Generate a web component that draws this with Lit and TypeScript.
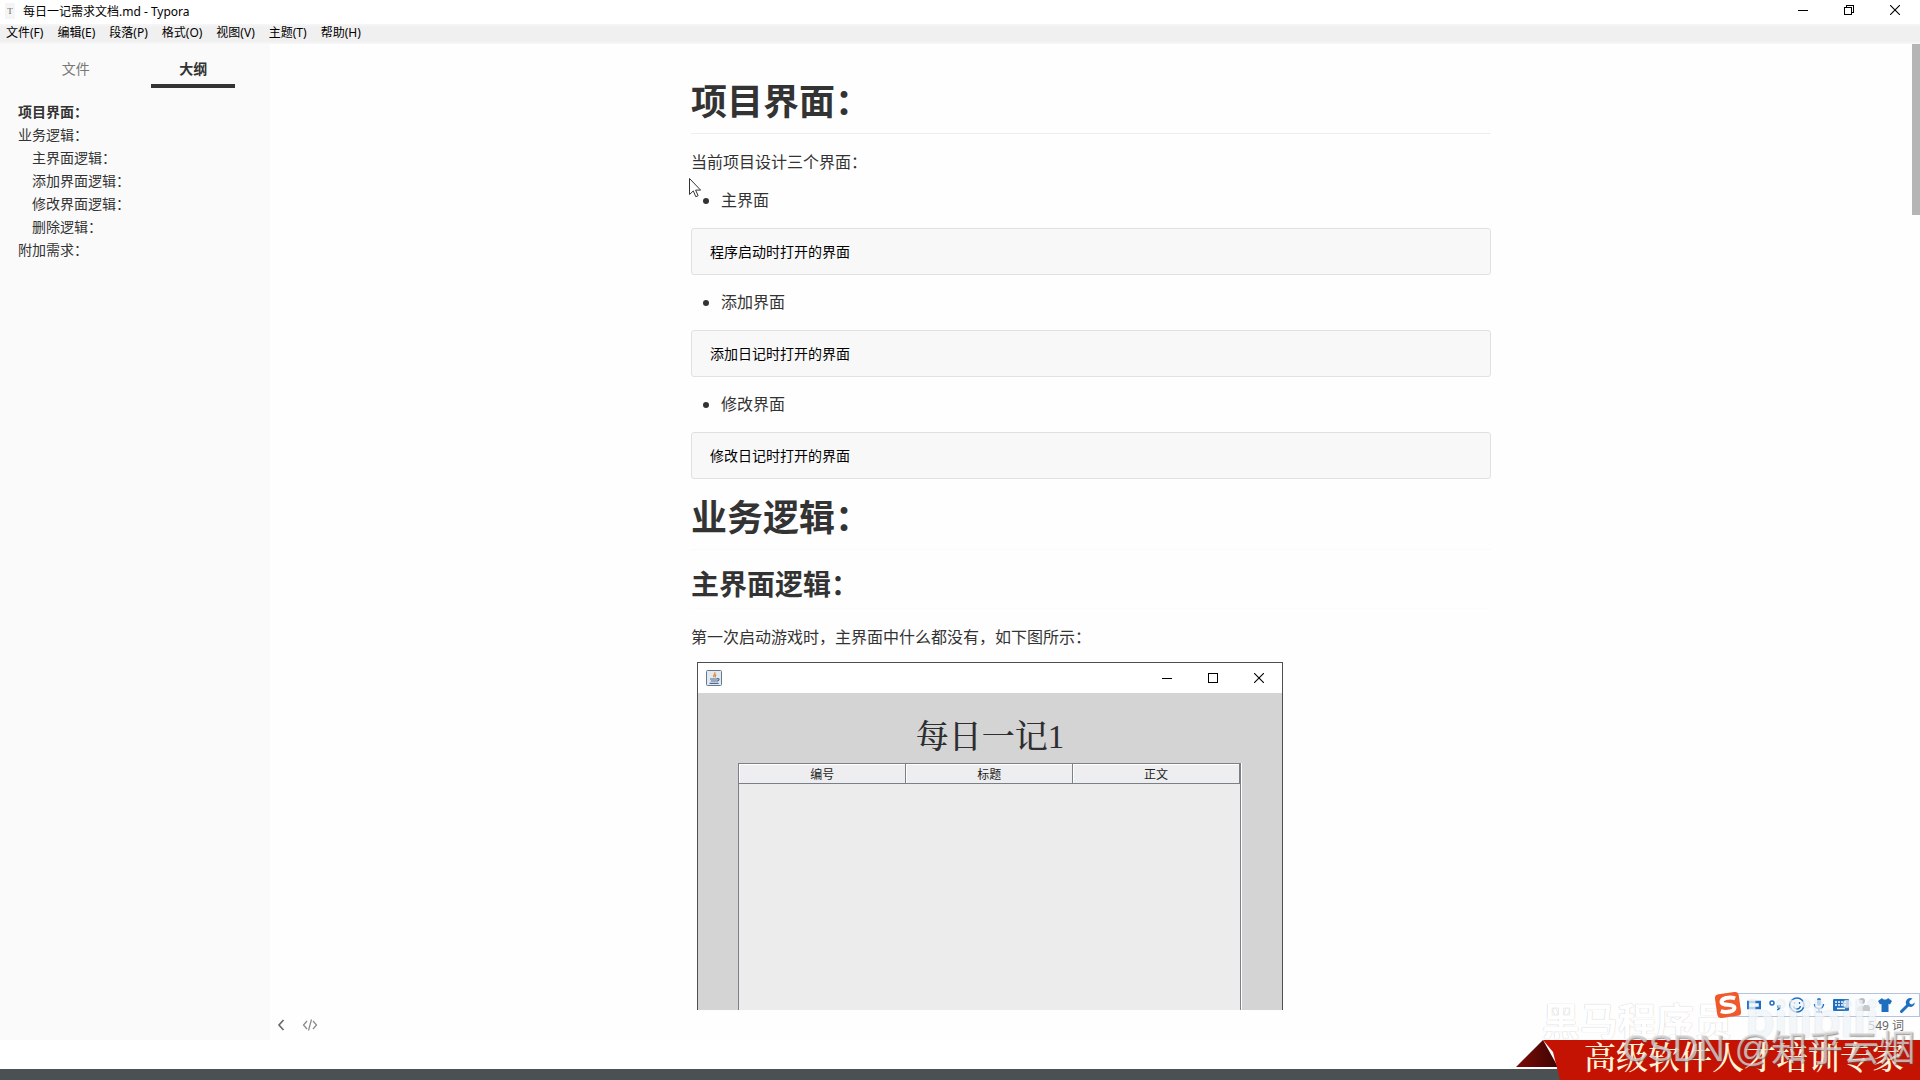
import { LitElement, html, css, svg } from "lit";
import { customElement, property } from "lit/decorators.js";

type OutlineItem = { text: string; level: number; active?: boolean };

const MENUS = ["文件(F)", "编辑(E)", "段落(P)", "格式(O)", "视图(V)", "主题(T)", "帮助(H)"];

const OUTLINE: OutlineItem[] = [
  { text: "项目界面：", level: 1, active: true },
  { text: "业务逻辑：", level: 1 },
  { text: "主界面逻辑：", level: 2 },
  { text: "添加界面逻辑：", level: 2 },
  { text: "修改界面逻辑：", level: 2 },
  { text: "删除逻辑：", level: 2 },
  { text: "附加需求：", level: 1 },
];

const SCREENS = [
  { name: "主界面", note: "程序启动时打开的界面" },
  { name: "添加界面", note: "添加日记时打开的界面" },
  { name: "修改界面", note: "修改日记时打开的界面" },
];

const minimizeIcon = html`<svg width="10" height="10" viewBox="0 0 10 10" shape-rendering="crispEdges"><path d="M0 5h10v1H0z" fill="#000" /></svg>`;
const maximizeIcon = html`<svg width="10" height="10" viewBox="0 0 10 10" shape-rendering="crispEdges"><path d="M.5 .5h9v9h-9z" fill="none" stroke="#000" /></svg>`;
const restoreIcon = html`<svg width="10" height="10" viewBox="0 0 10 10" shape-rendering="crispEdges"><path d="M.5 2.5h7v7h-7zM2.5 2.5v-2h7v7h-2" fill="none" stroke="#000" /></svg>`;
const closeIcon = html`<svg width="10" height="10" viewBox="0 0 10 10"><path d="M0 0l10 10M10 0L0 10" fill="none" stroke="#000" stroke-width="1.1" /></svg>`;

/** The small Swing window embedded in the document. */
@customElement("diary-window")
export class DiaryWindow extends LitElement {
  static styles = css`
    :host { display: block; }
    .window {
      display: flex;
      flex-direction: column;
      height: 460px;
      box-sizing: border-box;
      border: 1px solid #4c4e50;
      background: #d4d4d4;
    }
    .bar { display: flex; align-items: center; height: 30px; background: #fff; padding-left: 8px; }
    .java { display: block; margin-right: auto; }
    .btn {
      display: flex; align-items: center; justify-content: center;
      width: 46px; height: 28px; padding: 0; border: 0; background: none;
    }
    .title {
      margin: 0;
      padding-top: 18px;
      text-align: center;
      font: 500 33px/52px "Liberation Serif", "Noto Serif CJK SC", "Noto Sans CJK SC", serif;
      color: #2e2e30;
    }
    .pane {
      display: flex;
      flex: 1;
      margin: 0 41px 0 40px;
      border: solid #7a8087;
      border-width: 1px 1px 0 1px;
      box-shadow: 1px 0 0 #fff;
      background: #ececec;
    }
    .grid { width: 100%; height: 20px; border-collapse: collapse; table-layout: fixed; align-self: flex-start; }
    .cell {
      height: 17px; padding: 2px 0 0;
      border-right: 1px solid #7a8087;
      border-bottom: 1px solid #7a8087;
      box-shadow: inset 1px 1px 0 #fff;
      background: #eeeef0;
      font: 400 12px/17px "Noto Sans", "Noto Sans CJK SC", sans-serif;
      color: #222;
    }
  `;

  render() {
    return html`
      <section class="window">
        <div class="bar">
          <svg class="java" width="16" height="16" viewBox="0 0 16 16">
            <rect x=".5" y=".5" width="15" height="15" rx="1" fill="#e3e9f0" stroke="#66788f" />
            <path d="M8.6 2.2c1.8 1.6-2.6 2.600-.6 5M10.200 4.600c-1.600 1-1.400 1.500-.6 2.800" fill="none" stroke="#e8872e" stroke-width="1.200" />
            <path d="M4 9h7.500M4.800 11h6M11.200 8.600c2.600-.5 2.300 2-.3 2.600M3.600 13.300h9" fill="none" stroke="#4c6a92" stroke-width="1.200" />
          </svg>
          <button class="btn" aria-label="最小化">${minimizeIcon}</button>
          <button class="btn" aria-label="最大化">${maximizeIcon}</button>
          <button class="btn" aria-label="关闭">${closeIcon}</button>
        </div>
        <h3 class="title">每日一记1</h3>
        <div class="pane">
          <table class="grid">
            <thead>
              <tr>${["编号", "标题", "正文"].map((t) => html`<th class="cell" scope="col">${t}</th>`)}</tr>
            </thead>
          </table>
        </div>
      </section>
    `;
  }
}

/** Floating input-method toolbar. */
@customElement("ime-toolbar")
export class ImeToolbar extends LitElement {
  static styles = css`
    :host { display: flex; align-items: center; }
    .logo { display: block; z-index: 1; margin-right: -11px; }
    .strip {
      display: flex; align-items: center; justify-content: space-between;
      width: 189px; height: 24px; box-sizing: border-box; padding: 0 4px 0 15px;
      border: 1px solid #b6c3dc; background: #fbfdff;
    }
    .tool { display: block; padding: 0; border: 0; background: none; height: 16px; }
    .glyph { display: block; }
  `;

  private tools = [
    { label: "中文", w: 14, art: svg`<path d="M1 5h12v6H1z" fill="none" stroke="#1f6fc0" stroke-width="2.500" />` },
    { label: "标点", w: 13, art: svg`<circle cx="3" cy="6" r="2" fill="none" stroke="#1f6fc0" stroke-width="1.500" /><path d="M8 8h4c.3 3-1 5-4 5.500v-1.500c1.200-.5 1.500-1 1.500-1.500H8z" fill="#1f6fc0" />` },
    { label: "表情", w: 16, art: svg`<circle cx="8" cy="8" r="7" fill="none" stroke="#1f6fc0" stroke-width="1.500" /><path d="M4.500 9c1 4 6 4 7 0M5.500 5v2M10.500 5v2" fill="none" stroke="#1f6fc0" stroke-width="1.300" />` },
    { label: "语音", w: 12, art: svg`<rect x="4" y="1" width="4" height="8" rx="2" fill="#1f6fc0" /><path d="M1.500 7c0 6 9 6 9 0M6 11.500V15M3 15h6" fill="none" stroke="#1f6fc0" stroke-width="1.500" />` },
    { label: "键盘", w: 16, art: svg`<rect x="0" y="2" width="16" height="12" rx="1" fill="#1f6fc0" /><path d="M2 5h12M2 8h12" stroke="#fff" stroke-width="1.600" stroke-dasharray="2 1" /><path d="M4 11.500h8" stroke="#fff" stroke-width="1.500" />` },
    { label: "登录", w: 14, art: svg`<circle cx="5" cy="4" r="3" fill="#b6babd" /><path d="M0 14c0-7 9-7 9 0zM7 8h6v6H7z" fill="#c6c9cb" />` },
    { label: "皮肤", w: 14, art: svg`<path d="M4 1c1 2 5 2 6 0l4 3-2 3.500-1.500-.8V15h-7V6.700L2 7.500 0 4z" fill="#1f6fc0" />` },
    { label: "工具箱", w: 15, art: svg`<path d="M1.500 14.500L8.500 7.500" stroke="#1f6fc0" stroke-width="3" stroke-linecap="round" /><path d="M12.500 1.500a4.500 4.500 0 1 0 2.300 4L12 7.500 9.500 6.500 9.500 4z" fill="#1f6fc0" />` },
  ];

  render() {
    return html`
      <svg class="logo" width="28" height="28" viewBox="0 0 28 28">
        <g transform="rotate(-8 14 14)">
          <rect x="2" y="2" width="24" height="24" rx="4" fill="#f0592a" />
          <path d="M22 8.500C17 6 8 6 8 10.500c0 4 12 2.500 12 7 0 4-9 4-14 1.500" fill="none" stroke="#fff" stroke-width="4" />
        </g>
      </svg>
      <div class="strip">
        ${this.tools.map(
          (t) => html`<button class="tool" aria-label=${t.label}>
            <svg class="glyph" width=${t.w} height="16" viewBox="0 0 ${t.w} 16">${t.art}</svg>
          </button>`
        )}
      </div>
    `;
  }
}

/** Ribbon in the lower right corner with its overlaid marks. */
@customElement("corner-banner")
export class CornerBanner extends LitElement {
  static styles = css`
    :host { display: block; position: relative; width: 404px; height: 96px; }
    .ribbon { position: absolute; left: 0; bottom: 0; display: block; }
    .slogan, .school, .video, .author, .ime { position: absolute; white-space: nowrap; }
    .slogan { left: 68px; bottom: 5px; font: 500 32px/40px "KaiTi", "Noto Serif CJK SC", "Noto Sans CJK SC", serif; color: #fff3d6; }
    .school {
      left: 26px; bottom: 36px; font: 700 38px/50px "Noto Sans CJK SC", sans-serif;
      color: #fff; text-shadow: 0 0 1px #b8b8b8;
    }
    .ime { right: 0; bottom: 61px; }
    .video {
      left: 230px; bottom: 32px; font: 700 50px/60px Lato, sans-serif;
      color: #f1f5f9; opacity: 0.75; text-shadow: 0 0 2px #c4ccd4;
    }
    .author {
      right: 5px; bottom: 9px; font: 400 36px/44px "Liberation Sans", "Noto Sans CJK SC", sans-serif;
      color: rgba(225, 222, 222, 0.72); text-shadow: 1px 1px 1px rgba(90, 90, 90, 0.6);
    }
  `;

  render() {
    return html`
      <svg class="ribbon" width="404" height="40" viewBox="0 0 404 40">
        <defs>
          <linearGradient id="fold" x1="0" y1="0" x2="1" y2="0">
            <stop offset="0" stop-color="#7d0b06" />
            <stop offset="1" stop-color="#3c0503" />
          </linearGradient>
        </defs>
        <path d="M27 0L0 27h42z" fill="url(#fold)" />
        <path d="M0 27h42v2H0z" fill="#fff" />
        <path d="M27 0h377v40H44L37 12z" fill="#c41203" />
      </svg>
      <div class="slogan">高级软件人才培训专家</div>
      <div class="school">黑马程序员</div>
      <ime-toolbar class="ime"></ime-toolbar>
      <div class="video">bilibili</div>
      <div class="author">CSDN @知乎云烟</div>
    `;
  }
}

@customElement("app-root")
export class AppRoot extends LitElement {
  @property() fileName = "每日一记需求文档.md - Typora";

  static styles = css`
    :host { display: block; font-family: "Noto Sans", "Noto Sans CJK SC", sans-serif; color: #333; }
    .app { position: relative; display: flex; flex-direction: column; height: 100vh; overflow: hidden; background: #fefefe; }
    .titlebar { display: flex; align-items: flex-start; height: 24px; padding: 0 2px 0 5px; background: #fff; font-size: 12px; color: #000; box-sizing: border-box; }
    .doc-icon { width: 10px; margin: 3px 8px 0 0; font: 400 9px/16px "Liberation Serif", serif; text-align: center; color: #666; background: #f5f5f5; }
    .name { margin-right: auto; line-height: 23px; }
    .win-btn { display: flex; align-items: center; justify-content: center; width: 46px; height: 20px; padding: 0; border: 0; background: none; }
    .menubar { display: flex; gap: 14px; height: 20px; padding: 0 6px; background: linear-gradient(#f7f7f7, #f1f0f0 3px, #f1f0f0 17px, #f8f8f8); }
    .menu { padding: 0; border: 0; background: none; font: inherit; font-size: 12px; line-height: 18px; height: 18px; color: #000; }
    .body { display: flex; flex: 1; min-height: 0; }
    .sidebar { width: 270px; flex: none; background: #fafafa; }
    .tabs { display: flex; padding: 0 18px 0 17px; }
    .tab {
      flex: 1; display: flex; flex-direction: column; align-items: center; padding: 9px 0 0; border: 0;
      background: none; font: inherit; font-size: 14px; line-height: 31px; color: #777;
    }
    .tab::after { content: ""; width: 84px; height: 4px; }
    .tab.on { font-weight: 700; color: #333; }
    .tab.on::after { background: #333; }
    .outline { display: flex; flex-direction: column; padding: 12px 18px; }
    .entry { font-size: 14px; line-height: 23px; color: #333; text-decoration: none; }
    .entry.sub { padding-left: 14px; }
    .entry.active { font-weight: 700; }
    .editor { flex: 1; min-width: 0; display: flex; flex-direction: column; }
    .scroller { position: relative; flex: 1; min-height: 0; display: flex; }
    .page { flex: 1; min-width: 0; overflow: hidden; }
    .track { width: 8px; flex: none; }
    .thumb { height: 171px; background: #b5b5b5; }
    .article { position: relative; max-width: 800px; margin: 0 auto; padding-top: 36px; font-size: 16px; line-height: 26px; }
    .h1, .h2 { margin: 17px 0 15px; font-weight: 700; color: #333; }
    .h1 { padding-bottom: 9px; border-bottom: 1px solid #fbf9f9; font-size: 36px; line-height: 44px; }
    .h2 { padding-bottom: 7px; border-bottom: 1px solid #fcfcfc; font-size: 28px; line-height: 34px; }
    .h1.first { margin-top: 0; border-color: #eee; }
    .para { margin: 0 0 12px; }
    .list { margin: 14px 0 15px; padding-left: 30px; }
    .para + .list { margin-top: 12px; }
    .code {
      margin: 0; padding: 11px 18px; border: 1px solid #dfe2e5; border-radius: 3px; background: #f8f8f8;
      font: inherit; font-size: 14px; line-height: 23px; color: #000;
    }
    .shot { width: 586px; max-width: 100%; margin-left: 6px; }
    .cursor { position: absolute; left: -3px; top: 133px; display: block; }
    .status { display: flex; align-items: center; gap: 16px; height: 30px; padding: 0 16px 0 6px; }
    .icon-btn { display: block; height: 16px; padding: 0; border: 0; background: none; }
    .glyph { display: block; }
    .count { margin-left: auto; font-size: 12px; color: #666; }
    .gap { height: 29px; background: #fff; }
    .strip { height: 11px; background: #4b5052; }
    .banner { position: absolute; right: 0; bottom: 0; }
  `;

  render() {
    return html`
      <div class="app">
        <header class="titlebar">
          <span class="doc-icon">T</span>
          <span class="name">${this.fileName}</span>
          <button class="win-btn" aria-label="最小化">${minimizeIcon}</button>
          <button class="win-btn" aria-label="还原">${restoreIcon}</button>
          <button class="win-btn" aria-label="关闭">${closeIcon}</button>
        </header>
        <nav class="menubar">${MENUS.map((m) => html`<button class="menu">${m}</button>`)}</nav>
        <div class="body">
          <aside class="sidebar">
            <div class="tabs">
              <button class="tab">文件</button>
              <button class="tab on">大纲</button>
            </div>
            <nav class="outline">
              ${OUTLINE.map(
                (o) => html`<a href="#" class="entry ${o.level > 1 ? "sub" : ""} ${o.active ? "active" : ""}">${o.text}</a>`
              )}
            </nav>
          </aside>
          <main class="editor">
            <div class="scroller">
              <div class="page">
                <article class="article">
                  <h1 class="h1 first">项目界面：</h1>
                  <p class="para">当前项目设计三个界面：</p>
                  ${SCREENS.map(
                    (s) => html`<ul class="list"><li>${s.name}</li></ul><pre class="code">${s.note}</pre>`
                  )}
                  <h1 class="h1">业务逻辑：</h1>
                  <h2 class="h2">主界面逻辑：</h2>
                  <p class="para">第一次启动游戏时，主界面中什么都没有，如下图所示：</p>
                  <diary-window class="shot"></diary-window>
                  <svg class="cursor" width="14" height="21" viewBox="0 0 14 21">
                    <path d="M1.500 1.500v16l3.800-3.600 2.500 5.800 2.300-1-2.500-5.600h5z" fill="#fff" stroke="#333" />
                  </svg>
                </article>
              </div>
              <div class="track"><div class="thumb"></div></div>
            </div>
            <footer class="status">
              <button class="icon-btn" aria-label="隐藏侧边栏">
                <svg class="glyph" width="10" height="16" viewBox="0 0 10 16"><path d="M7.500 3L3 8l4.500 5" fill="none" stroke="#666" stroke-width="1.600" /></svg>
              </button>
              <button class="icon-btn" aria-label="源代码模式">
                <svg class="glyph" width="16" height="16" viewBox="0 0 16 16"><path d="M5 4L1.500 8 5 12M11 4l3.500 4L11 12M9.500 2.500l-3 11" fill="none" stroke="#888" stroke-width="1.200" /></svg>
              </button>
              <span class="count">549 词</span>
            </footer>
          </main>
        </div>
        <div class="gap"></div>
        <div class="strip"></div>
        <corner-banner class="banner"></corner-banner>
      </div>
    `;
  }
}
